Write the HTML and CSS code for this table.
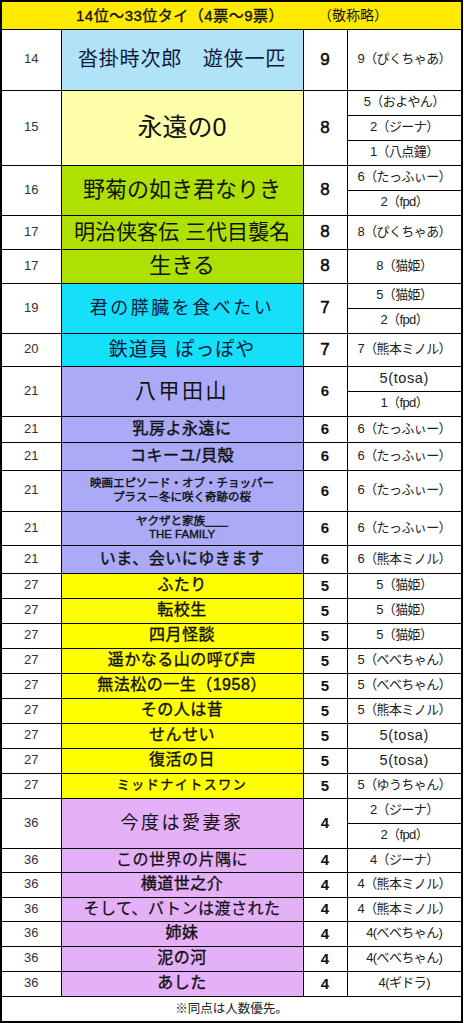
FILE: index.html
```html
<!DOCTYPE html>
<html lang="ja">
<head>
    <meta charset="UTF-8">
    <meta name="viewport" content="width=device-width, initial-scale=1.0">
    <title>14位～33位タイ</title>
    <link rel="stylesheet" href="styles.css">
</head>
<body>
    <table class="ranking">
        <colgroup>
            <col class="col-rank">
            <col class="col-title">
            <col class="col-votes">
            <col class="col-voter">
        </colgroup>
        <tr class="r28">
            <td colspan="4" class="head">
                <div class="head-inner">
                    <span class="head-main">14位～33位タイ（4票～9票）</span>
                    <span class="head-note">（敬称略）</span>
                </div>
            </td>
        </tr>

        <tr class="r61">
            <td class="rank">14</td>
            <td class="title c-blue t-20 navy">沓掛時次郎　遊侠一匹</td>
            <td class="votes v-big">9</td>
            <td class="voter">9（ぴくちゃあ）</td>
        </tr>

        <tr class="r25">
            <td class="rank" rowspan="3">15</td>
            <td class="title c-cream t-25" rowspan="3">永遠の0</td>
            <td class="votes v-big" rowspan="3">8</td>
            <td class="voter">5（およやん）</td>
        </tr>
        <tr class="r25"><td class="voter">2（ジーナ）</td></tr>
        <tr class="r25"><td class="voter">1（八点鐘）</td></tr>

        <tr class="r25">
            <td class="rank" rowspan="2">16</td>
            <td class="title c-lime t-22" rowspan="2">野菊の如き君なりき</td>
            <td class="votes v-big" rowspan="2">8</td>
            <td class="voter">6（たっふぃー）</td>
        </tr>
        <tr class="r25"><td class="voter">2（fpd）</td></tr>

        <tr class="r34">
            <td class="rank">17</td>
            <td class="title c-lime t-21">明治侠客伝 三代目襲名</td>
            <td class="votes v-big">8</td>
            <td class="voter">8（ぴくちゃあ）</td>
        </tr>
        <tr class="r34">
            <td class="rank">17</td>
            <td class="title c-lime t-22">生きる</td>
            <td class="votes v-big">8</td>
            <td class="voter">8（猫姫）</td>
        </tr>

        <tr class="r25">
            <td class="rank" rowspan="2">19</td>
            <td class="title c-cyan t-18 wide navy" rowspan="2">君の膵臓を食べたい</td>
            <td class="votes v-big" rowspan="2">7</td>
            <td class="voter">5（猫姫）</td>
        </tr>
        <tr class="r25"><td class="voter">2（fpd）</td></tr>

        <tr class="r33">
            <td class="rank">20</td>
            <td class="title c-cyan t-19 navy">鉄道員 ぽっぽや</td>
            <td class="votes v-big">7</td>
            <td class="voter">7（熊本ミノル）</td>
        </tr>

        <tr class="r25">
            <td class="rank" rowspan="2">21</td>
            <td class="title c-peri t-21 wide" rowspan="2">八甲田山</td>
            <td class="votes" rowspan="2">6</td>
            <td class="voter latin">5(tosa)</td>
        </tr>
        <tr class="r25"><td class="voter">1（fpd）</td></tr>

        <tr class="r26">
            <td class="rank">21</td>
            <td class="title c-peri t-16 bold">乳房よ永遠に</td>
            <td class="votes">6</td>
            <td class="voter">6（たっふぃー）</td>
        </tr>
        <tr class="r28">
            <td class="rank">21</td>
            <td class="title c-peri t-16 bold">コキーユ/貝殻</td>
            <td class="votes">6</td>
            <td class="voter">6（たっふぃー）</td>
        </tr>
        <tr class="r41">
            <td class="rank">21</td>
            <td class="title c-peri t-11 bold">映画エピソード・オブ・チョッパー<br>プラス－冬に咲く奇跡の桜</td>
            <td class="votes">6</td>
            <td class="voter">6（たっふぃー）</td>
        </tr>
        <tr class="r34">
            <td class="rank">21</td>
            <td class="title c-peri t-11 bold">ヤクザと家族＿＿<br>THE FAMILY</td>
            <td class="votes">6</td>
            <td class="voter">6（たっふぃー）</td>
        </tr>
        <tr class="r28">
            <td class="rank">21</td>
            <td class="title c-peri t-16 bold">いま、会いにゆきます</td>
            <td class="votes">6</td>
            <td class="voter">6（熊本ミノル）</td>
        </tr>

        <tr class="r25">
            <td class="rank">27</td>
            <td class="title c-yellow t-16 bold">ふたり</td>
            <td class="votes">5</td>
            <td class="voter">5（猫姫）</td>
        </tr>
        <tr class="r25">
            <td class="rank">27</td>
            <td class="title c-yellow t-16 bold">転校生</td>
            <td class="votes">5</td>
            <td class="voter">5（猫姫）</td>
        </tr>
        <tr class="r25">
            <td class="rank">27</td>
            <td class="title c-yellow t-16 bold">四月怪談</td>
            <td class="votes">5</td>
            <td class="voter">5（猫姫）</td>
        </tr>
        <tr class="r25">
            <td class="rank">27</td>
            <td class="title c-yellow t-16 bold">遥かなる山の呼び声</td>
            <td class="votes">5</td>
            <td class="voter">5（べべちゃん）</td>
        </tr>
        <tr class="r25">
            <td class="rank">27</td>
            <td class="title c-yellow t-16 bold">無法松の一生（1958）</td>
            <td class="votes">5</td>
            <td class="voter">5（べべちゃん）</td>
        </tr>
        <tr class="r25">
            <td class="rank">27</td>
            <td class="title c-yellow t-16 bold">その人は昔</td>
            <td class="votes">5</td>
            <td class="voter">5（熊本ミノル）</td>
        </tr>
        <tr class="r25">
            <td class="rank">27</td>
            <td class="title c-yellow t-16 bold">せんせい</td>
            <td class="votes">5</td>
            <td class="voter latin">5(tosa)</td>
        </tr>
        <tr class="r25">
            <td class="rank">27</td>
            <td class="title c-yellow t-16 bold">復活の日</td>
            <td class="votes">5</td>
            <td class="voter latin">5(tosa)</td>
        </tr>
        <tr class="r25">
            <td class="rank">27</td>
            <td class="title c-yellow t-13 bold spaced">ミッドナイトスワン</td>
            <td class="votes">5</td>
            <td class="voter">5（ゆうちゃん）</td>
        </tr>

        <tr class="r25">
            <td class="rank" rowspan="2">36</td>
            <td class="title c-violet t-18 wide" rowspan="2">今度は愛妻家</td>
            <td class="votes" rowspan="2">4</td>
            <td class="voter">2（ジーナ）</td>
        </tr>
        <tr class="r25"><td class="voter">2（fpd）</td></tr>

        <tr class="r24">
            <td class="rank">36</td>
            <td class="title c-violet t-16 semi">この世界の片隅に</td>
            <td class="votes">4</td>
            <td class="voter">4（ジーナ）</td>
        </tr>
        <tr class="r25">
            <td class="rank">36</td>
            <td class="title c-violet t-16 bold">横道世之介</td>
            <td class="votes">4</td>
            <td class="voter">4（熊本ミノル）</td>
        </tr>
        <tr class="r24">
            <td class="rank">36</td>
            <td class="title c-violet t-16 semi">そして、バトンは渡された</td>
            <td class="votes">4</td>
            <td class="voter">4（熊本ミノル）</td>
        </tr>
        <tr class="r25">
            <td class="rank">36</td>
            <td class="title c-violet t-16 bold">姉妹</td>
            <td class="votes">4</td>
            <td class="voter">4(べべちゃん)</td>
        </tr>
        <tr class="r25">
            <td class="rank">36</td>
            <td class="title c-violet t-16 bold">泥の河</td>
            <td class="votes">4</td>
            <td class="voter">4(べべちゃん)</td>
        </tr>
        <tr class="r25">
            <td class="rank">36</td>
            <td class="title c-violet t-16 bold">あした</td>
            <td class="votes">4</td>
            <td class="voter">4(ギドラ)</td>
        </tr>

        <tr class="r26">
            <td colspan="4" class="foot">※同点は人数優先。</td>
        </tr>
    </table>
</body>
</html>
```

FILE: styles.css
```css
* {
    margin: 0;
    padding: 0;
    box-sizing: border-box;
}
body {
    background: #fff;
    font-family: "Liberation Sans", "Noto Sans CJK JP", sans-serif;
    color: #111;
}

.ranking {
    border-collapse: collapse;
    table-layout: fixed;
    width: 461px;
    border: 2px solid #000;
}
.col-rank { width: 60px; }
.col-title { width: 242px; }
.col-votes { width: 44px; }
.col-voter { width: 115px; }

.ranking td {
    border: 1px solid #000;
    text-align: center;
    vertical-align: middle;
    line-height: 1.15;
    white-space: nowrap;
    overflow: hidden;
}

/* row heights */
.r24 { height: 24px; }
.r25 { height: 25px; }
.r26 { height: 26px; }
.r28 { height: 28px; }
.r33 { height: 33px; }
.r34 { height: 34px; }
.r41 { height: 41px; }
.r61 { height: 61px; }

/* header / footer */
.head {
    background: #ffea00;
    border-bottom: 2px solid #000;
}
.head-inner {
    display: flex;
    align-items: center;
    padding-left: 74px;
    gap: 34px;
    font-size: 15px;
    -webkit-text-stroke: 0.35px #111;
}
.head-main { letter-spacing: 0.5px; }
.head-note { font-size: 14px; -webkit-text-stroke: 0; }
.foot {
    font-size: 12.5px;
    color: #222;
    border-top: 2px solid #000;
}

/* columns */
.rank {
    font-size: 13px;
    color: #333;
}
.votes {
    font-weight: bold;
    font-size: 15px;
}
.v-big { font-size: 17px; font-weight: normal; -webkit-text-stroke: 0.5px #000; }
.voter {
    font-size: 13px;
    color: #222;
    letter-spacing: -0.6px;
}
.voter.latin {
    font-size: 14.5px;
    letter-spacing: 0.6px;
}

/* title cell colours */
.c-blue { background: #b0e2f8; }
.c-cream { background: #ffffaa; }
.c-lime { background: #aee000; }
.c-cyan { background: #14e0fa; }
.c-peri { background: #aaaaf6; }
.c-yellow { background: #ffff00; }
.c-violet { background: #e6b0f8; }

/* title sizes */
.title { color: #111; }
.navy { color: #10183a; }
.t-25 { font-size: 25px; }
.t-22 { font-size: 22px; }
.t-21 { font-size: 21px; }
.t-20 { font-size: 20px; letter-spacing: 0.8px; }
.t-19 { font-size: 19px; letter-spacing: 1px; }
.t-18 { font-size: 18px; }
.t-16 { font-size: 16px; letter-spacing: 0.5px; }
.t-13 { font-size: 13px; }
.t-11 { font-size: 11.5px; line-height: 14px; }
.wide { letter-spacing: 2.5px; }
.spaced { letter-spacing: 1.5px; }
.bold { -webkit-text-stroke: 0.4px #111; }
.semi { -webkit-text-stroke: 0.25px #111; }
```
